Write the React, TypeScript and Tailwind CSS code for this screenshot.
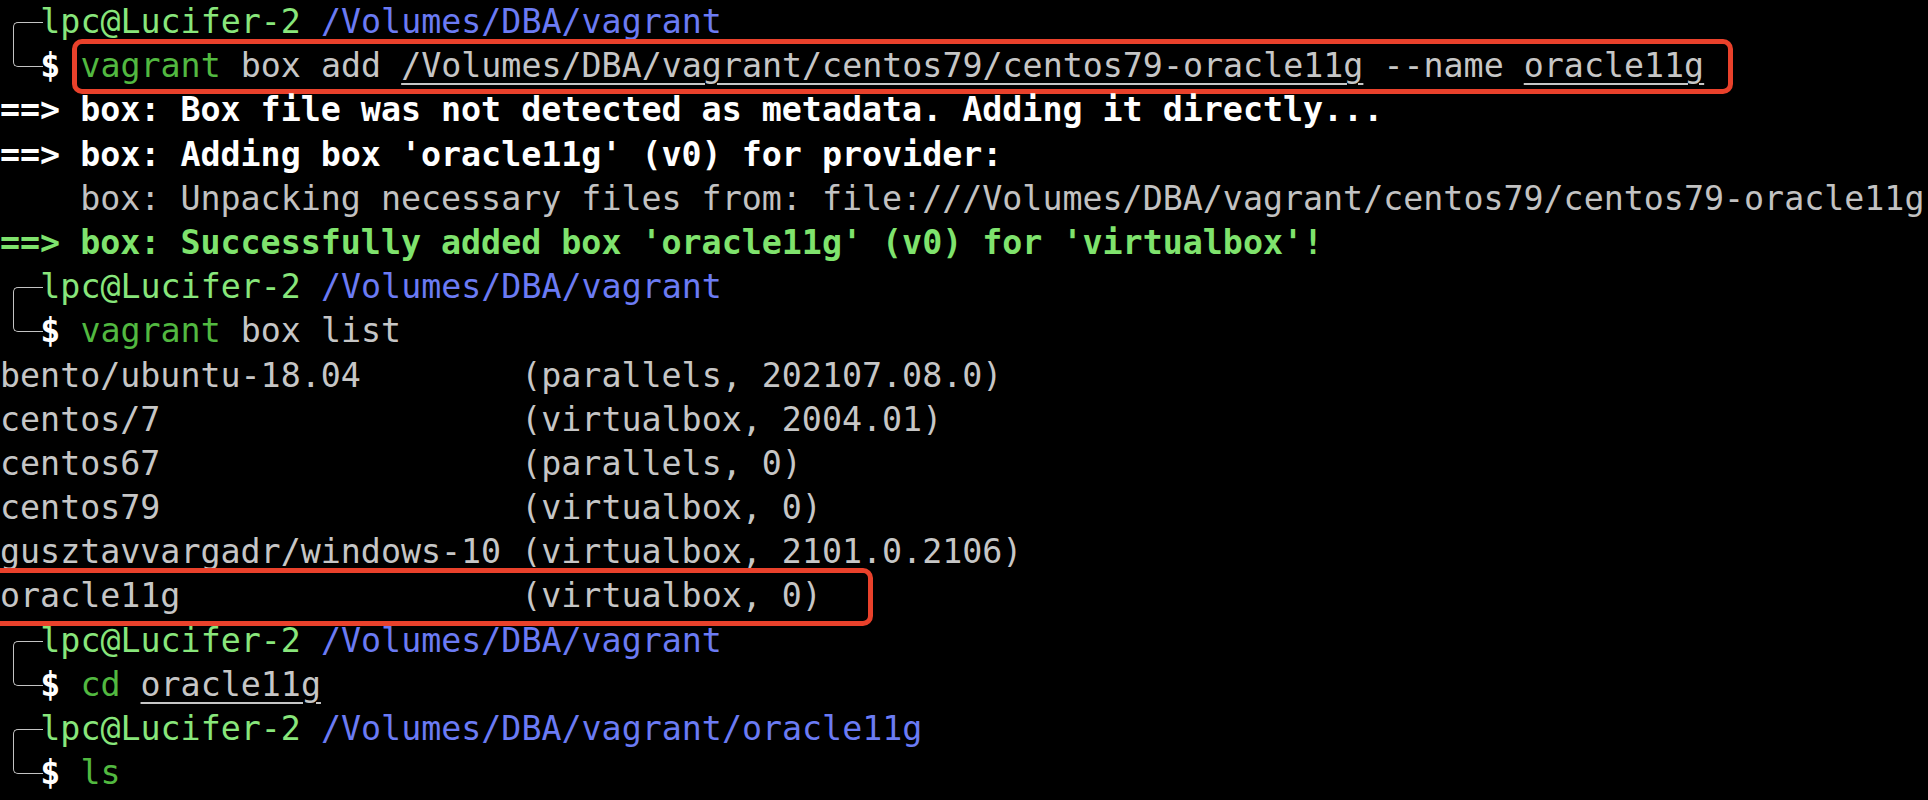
import React from 'react'

const userHost = 'text-[#88e67b]'
const pathBlue = 'text-[#6b7bf4]'
const cmdGreen = 'text-[#52b940]'
const argGray = 'text-[#c6c6c6]'

function BracketTop() {
  return (
    <div className="w-[40.3px] h-full shrink-0">
      <div className="mt-[22px] ml-[13px] w-[30px] h-[22.2px] border-l-[1.5px] border-t-[1.5px] border-[#c4c4c4] rounded-tl-[5px]" />
    </div>
  )
}

function BracketBottom() {
  return (
    <div className="w-[40.3px] h-full shrink-0">
      <div className="ml-[13px] w-[30px] h-[22.8px] border-l-[1.5px] border-b-[1.5px] border-[#c4c4c4] rounded-bl-[5px]" />
    </div>
  )
}

function Line({ children }: { children?: React.ReactNode }) {
  return <div className="h-[44.2px] flex items-center whitespace-pre">{children}</div>
}

function Prompt({ path }: { path: string }) {
  return (
    <Line>
      <BracketTop />
      <span className={userHost}>lpc@Lucifer-2</span>
      <span> </span>
      <span className={pathBlue}>{path}</span>
    </Line>
  )
}

function Command({ children, boxed = false }: { children: React.ReactNode; boxed?: boolean }) {
  return (
    <Line>
      <BracketBottom />
      <span className="text-white font-bold">$</span>
      <span> </span>
      {boxed ? (
        <span className="flex items-center h-[55px] -ml-[8px] pl-[3px] pr-[24px] border-[5px] border-[#e9412b] rounded-[10px]">
          {children}
        </span>
      ) : (
        children
      )}
    </Line>
  )
}

const boxes = [
  ['bento/ubuntu-18.04', '(parallels, 202107.08.0)'],
  ['centos/7', '(virtualbox, 2004.01)'],
  ['centos67', '(parallels, 0)'],
  ['centos79', '(virtualbox, 0)'],
  ['gusztavvargadr/windows-10', '(virtualbox, 2101.0.2106)'],
]

const under = 'underline underline-offset-[6px] decoration-[1.5px]'

export default function App() {
  return (
    <div className="w-[1928px] h-[800px] bg-black overflow-hidden font-['DejaVu_Sans_Mono',monospace] text-[33.3px] leading-[44.2px] text-[#c6c6c6]">
      <Prompt path="/Volumes/DBA/vagrant" />
      <Command boxed>
        <span className={cmdGreen}>vagrant</span>
        <span className={argGray}> box add </span>
        <span className={`${argGray} ${under}`}>/Volumes/DBA/vagrant/centos79/centos79-oracle11g</span>
        <span className={argGray}> --name </span>
        <span className={`${argGray} ${under}`}>oracle11g</span>
      </Command>
      <Line>
        <span className="text-white font-bold">==&gt; box: Box file was not detected as metadata. Adding it directly...</span>
      </Line>
      <Line>
        <span className="text-white font-bold">==&gt; box: Adding box 'oracle11g' (v0) for provider: </span>
      </Line>
      <Line>
        <span className="text-[#c2c2c2]">    box: Unpacking necessary files from: file:///Volumes/DBA/vagrant/centos79/centos79-oracle11g</span>
      </Line>
      <Line>
        <span className="text-[#7fe36d] font-bold">==&gt; box: Successfully added box 'oracle11g' (v0) for 'virtualbox'!</span>
      </Line>

      <Prompt path="/Volumes/DBA/vagrant" />
      <Command>
        <span className={cmdGreen}>vagrant</span>
        <span className={argGray}> box list</span>
      </Command>
      {boxes.map(([name, info]) => (
        <Line key={name}>
          <span>{name.padEnd(26, ' ')}{info}</span>
        </Line>
      ))}
      <Line>
        <span className="flex items-center h-[58px] -ml-[10px] pl-[5px] pr-[46px] border-[5px] border-[#e9412b] rounded-[10px]">
          {'oracle11g'.padEnd(26, ' ')}(virtualbox, 0)
        </span>
      </Line>

      <Prompt path="/Volumes/DBA/vagrant" />
      <Command>
        <span className={cmdGreen}>cd</span>
        <span> </span>
        <span className={`${argGray} ${under}`}>oracle11g</span>
      </Command>
      <Prompt path="/Volumes/DBA/vagrant/oracle11g" />
      <Command>
        <span className={cmdGreen}>ls</span>
      </Command>
    </div>
  )
}
